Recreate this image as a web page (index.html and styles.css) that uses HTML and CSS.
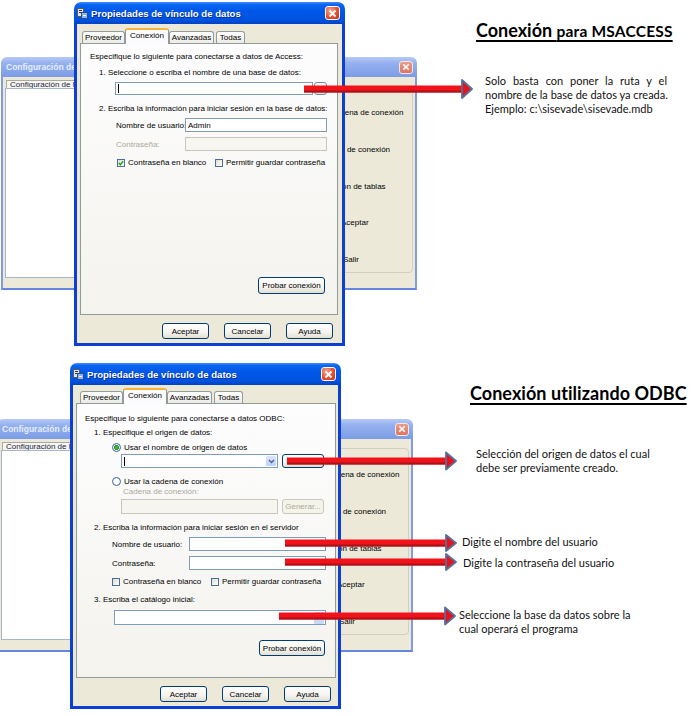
FILE: index.html
```html
<!DOCTYPE html>
<html lang="es">
<head>
<meta charset="utf-8">
<title>Conexión</title>
<link rel="stylesheet" href="styles.css">
</head>
<body>
<section class="sec sec-a">
  <div class="desk">
    <div class="bgwin bg-a">
      <div class="btitle"><span class="btxt">Configuración de</span><span class="bx"><svg width="8" height="8" viewBox="0 0 8 8"><path d="M1.2 1.2l5.6 5.6M6.8 1.2l-5.6 5.6" stroke="#fff" stroke-width="1.6"/></svg></span></div>
      <div class="bbody">
        <div class="lst">
          <div class="lhead"><span class="ltab">Configuración de la</span></div>
          <div class="lbox"></div>
        </div>
        <div class="rpan">
          <span class="rl">Cadena de conexión</span>
          <span class="rl">Test de conexión</span>
          <span class="rl">Unión de tablas</span>
          <span class="rl rl-ok">Aceptar</span>
          <span class="rl rl-salir">Salir</span>
        </div>
      </div>
    </div>

    <div class="dlg dlg-a">
      <div class="tbar">
        <svg class="ticon" width="11" height="11" viewBox="0 0 11 11"><rect x="0.5" y="0.5" width="6" height="8" fill="#e4e4e4" stroke="#5a5a5a"/><path d="M2 2.5h3M2 4.5h3" stroke="#333"/><rect x="4.5" y="4.5" width="6" height="6" fill="#8db4ee" stroke="#24508f"/><path d="M6 7.5h3" stroke="#fff"/></svg>
        <span class="ttl">Propiedades de vínculo de datos</span>
        <span class="xbtn"><svg width="9" height="9" viewBox="0 0 9 9"><path d="M1.5 1.5l6 6M7.5 1.5l-6 6" stroke="#fff" stroke-width="1.8"/></svg></span>
      </div>
      <div class="dframe fr-a">
        <div class="tabs ta">
          <span class="tab tw1">Proveedor</span>
          <span class="tab tw2 on">Conexión</span>
          <span class="tab tw3">Avanzadas</span>
          <span class="tab tw4">Todas</span>
        </div>
        <div class="panel pa">
          <div class="ln a1">Especifique lo siguiente para conectarse a datos de Access:</div>
          <div class="ln a2">1. Seleccione o escriba el nombre de una base de datos:</div>
          <div class="row a-db"><span class="inp grow"><i class="caret"></i></span><span class="btn b-dots">...</span></div>
          <div class="ln a3">2. Escriba la información para iniciar sesión en la base de datos:</div>
          <div class="row a-user"><span class="lab la">Nombre de usuario:</span><span class="inp grow">Admin</span></div>
          <div class="row a-pass"><span class="lab la dis">Contraseña:</span><span class="inp grow off"></span></div>
          <div class="row a-chk">
            <span class="cg cg-a"><span class="cb"><svg width="6" height="6" viewBox="0 0 6 6"><path d="M0.8 3l1.6 1.6L5.2 1.2" fill="none" stroke="#21a121" stroke-width="1.4"/></svg></span>Contraseña en blanco</span>
            <span class="cg"><span class="cb"></span>Permitir guardar contraseña</span>
          </div>
          <div class="btn probar a-prob">Probar conexión</div>
        </div>
        <div class="btns">
          <span class="btn bb">Aceptar</span>
          <span class="btn bb">Cancelar</span>
          <span class="btn bb">Ayuda</span>
        </div>
      </div>
    </div>
  </div>

  <div class="notes">
    <h2 class="h ha">Conexión <span class="hs">para MSACCESS</span></h2>
    <div class="txt pt">
      <p class="jl">Solo basta con poner la ruta y el</p>
      <p>nombre de la base de datos ya creada.</p>
      <p>Ejemplo: c:\sisevade\sisevade.mdb</p>
    </div>
  </div>

  <svg class="arrow ar-a" width="169" height="20" viewBox="0 0 169 20"><rect x="0" y="6.5" width="159" height="7" fill="#f2121a"/><rect x="0" y="11.5" width="159" height="2" fill="#a8131a"/><path d="M158 1L168 10L158 19Z" fill="#e5141c" stroke="#56709c" stroke-width="1.8" stroke-linejoin="round"/></svg>
</section>

<section class="sec sec-b">
  <div class="desk">
    <div class="bgwin bg-b">
      <div class="btitle"><span class="btxt">Configuración de</span><span class="bx"><svg width="8" height="8" viewBox="0 0 8 8"><path d="M1.2 1.2l5.6 5.6M6.8 1.2l-5.6 5.6" stroke="#fff" stroke-width="1.6"/></svg></span></div>
      <div class="bbody">
        <div class="lst">
          <div class="lhead"><span class="ltab">Configuración de la</span></div>
          <div class="lbox"></div>
        </div>
        <div class="rpan">
          <span class="rl">Cadena de conexión</span>
          <span class="rl">Test de conexión</span>
          <span class="rl">Unión de tablas</span>
          <span class="rl rl-ok">Aceptar</span>
          <span class="rl rl-salir">Salir</span>
        </div>
      </div>
    </div>

    <div class="dlg dlg-b">
      <div class="tbar">
        <svg class="ticon" width="11" height="11" viewBox="0 0 11 11"><rect x="0.5" y="0.5" width="6" height="8" fill="#e4e4e4" stroke="#5a5a5a"/><path d="M2 2.5h3M2 4.5h3" stroke="#333"/><rect x="4.5" y="4.5" width="6" height="6" fill="#8db4ee" stroke="#24508f"/><path d="M6 7.5h3" stroke="#fff"/></svg>
        <span class="ttl">Propiedades de vínculo de datos</span>
        <span class="xbtn"><svg width="9" height="9" viewBox="0 0 9 9"><path d="M1.5 1.5l6 6M7.5 1.5l-6 6" stroke="#fff" stroke-width="1.8"/></svg></span>
      </div>
      <div class="dframe fr-b">
        <div class="tabs tb">
          <span class="tab tw1">Proveedor</span>
          <span class="tab tw2 on">Conexión</span>
          <span class="tab tw3">Avanzadas</span>
          <span class="tab tw4">Todas</span>
        </div>
        <div class="panel pb">
          <div class="ln b1">Especifique lo siguiente para conectarse a datos ODBC:</div>
          <div class="ln b2">1. Especifique el origen de datos:</div>
          <div class="row b-r1"><span class="rd on"></span>Usar el nombre de origen de datos</div>
          <div class="row b-ds">
            <span class="inp w157"><i class="caret"></i><span class="dd"><svg width="7" height="5" viewBox="0 0 7 5"><path d="M1 1l2.5 2.5L6 1" fill="none" stroke="#4d6185" stroke-width="1.4"/></svg></span></span>
            <span class="btn w42"></span>
          </div>
          <div class="row b-r2"><span class="rd"></span>Usar la cadena de conexión</div>
          <div class="ln b-cad dis">Cadena de conexión:</div>
          <div class="row b-gen"><span class="inp w157 off"></span><span class="btn w42 boff">Generar...</span></div>
          <div class="ln b3">2. Escriba la información para iniciar sesión en el servidor</div>
          <div class="row b-user"><span class="lab lb">Nombre de usuario:</span><span class="inp w137"></span></div>
          <div class="row b-pass"><span class="lab lb">Contraseña:</span><span class="inp w137"></span></div>
          <div class="row b-chk">
            <span class="cg cg-b"><span class="cb"></span>Contraseña en blanco</span>
            <span class="cg"><span class="cb"></span>Permitir guardar contraseña</span>
          </div>
          <div class="ln b4">3. Escriba el catálogo inicial:</div>
          <div class="row b-cat"><span class="inp w212"><span class="dd dd-l"></span></span></div>
          <div class="btn probar b-prob">Probar conexión</div>
        </div>
        <div class="btns">
          <span class="btn bb">Aceptar</span>
          <span class="btn bb">Cancelar</span>
          <span class="btn bb">Ayuda</span>
        </div>
      </div>
    </div>
  </div>

  <div class="notes">
    <h2 class="h hb">Conexión utilizando ODBC</h2>
    <p class="txt nb1">Selección del origen de datos el cual<br>debe ser previamente creado.</p>
    <p class="txt nb2">Digite el nombre del usuario</p>
    <p class="txt nb3">Digite la contraseña del usuario</p>
    <p class="txt nb4">Seleccione la base da datos sobre la<br>cual operará el programa</p>
  </div>

  <svg class="arrow ar-b1" width="170" height="20" viewBox="0 0 170 20"><rect x="0" y="6.5" width="160" height="7" fill="#f2121a"/><rect x="0" y="11.5" width="160" height="2" fill="#a8131a"/><path d="M159 1.5L169 10L159 18.5Z" fill="#e5141c" stroke="#56709c" stroke-width="1.8" stroke-linejoin="round"/></svg>
  <svg class="arrow ar-b2" width="172" height="20" viewBox="0 0 172 20"><rect x="0" y="6.5" width="162" height="7" fill="#f2121a"/><rect x="0" y="11.5" width="162" height="2" fill="#a8131a"/><path d="M161 2L171 10L161 18Z" fill="#e5141c" stroke="#56709c" stroke-width="1.8" stroke-linejoin="round"/></svg>
  <svg class="arrow ar-b3" width="172" height="20" viewBox="0 0 172 20"><rect x="0" y="6.5" width="162" height="7" fill="#f2121a"/><rect x="0" y="11.5" width="162" height="2" fill="#a8131a"/><path d="M161 2L171 10L161 18Z" fill="#e5141c" stroke="#56709c" stroke-width="1.8" stroke-linejoin="round"/></svg>
  <svg class="arrow ar-b4" width="177" height="20" viewBox="0 0 177 20"><rect x="0" y="6.5" width="167" height="7" fill="#f2121a"/><rect x="0" y="11.5" width="167" height="2" fill="#a8131a"/><path d="M166 1.5L176 10L166 18.5Z" fill="#e5141c" stroke="#56709c" stroke-width="1.8" stroke-linejoin="round"/></svg>
</section>
</body>
</html>
```

FILE: styles.css
```css
* { box-sizing: border-box; margin: 0; padding: 0; }

html, body { background: #fff; }

body {
  width: 693px;
  height: 716px;
  overflow: hidden;
  font-family: "Liberation Sans", Arial, sans-serif;
  font-size: 8px;
  color: #000;
}

.sec { position: relative; display: flex; }
.sec-a { height: 355px; }
.sec-b { height: 361px; }

.desk { position: relative; width: 455px; flex: none; }

/* ---------- background window ---------- */
.bgwin {
  position: absolute;
  width: 416px;
  height: 233px;
  display: flex;
  flex-direction: column;
  z-index: 1;
}
.bg-a { left: 1px; top: 57px; }
.bg-b { left: -3px; top: 64px; }

.btitle {
  height: 20px;
  flex: none;
  display: flex;
  align-items: center;
  padding: 0 4px 0 5px;
  border-radius: 6px 6px 0 0;
  background: linear-gradient(#b6caf5, #96b1ee 30%, #86a5ea 70%, #7d9ce5);
  color: #e6edfc;
  font: bold 8.5px "Liberation Sans", Arial, sans-serif;
}
.btxt { flex: 1; white-space: nowrap; overflow: hidden; }
.bx {
  width: 14px;
  height: 13px;
  border: 1px solid #f4e8e6;
  border-radius: 3px;
  background: linear-gradient(#eb9c88, #dc7560);
  display: flex;
  align-items: center;
  justify-content: center;
}

.bbody {
  flex: 1;
  display: flex;
  background: #ece9d8;
  border: 2px solid #7f9be4;
  border-top: none;
  border-bottom-color: #6685dc;
  padding: 3px 2px 10px;
}
.lst { width: 295px; display: flex; flex-direction: column; flex: none; }
.lhead { height: 8px; display: flex; }
.ltab {
  margin-left: 1px;
  padding: 0 3px;
  height: 8px;
  line-height: 8px;
  border: 1px solid #a9a99e;
  border-bottom: none;
  background: #f7f6f1;
  color: #1b2346;
  white-space: nowrap;
}
.lbox { flex: 1; background: #fff; border: 1px solid #a7b5ca; }

.rpan {
  flex: 1;
  margin: 6px 0 5px;
  border: 1px solid #d2cfbf;
  border-radius: 4px;
  padding: 21px 0 0 29px;
  display: flex;
  flex-direction: column;
  gap: 26.75px;
}
.rl { height: 10px; line-height: 10px; white-space: nowrap; }
.rl-ok { padding-left: 11px; }
.rl-salir { padding-left: 13px; }

/* ---------- dialog ---------- */
.dlg {
  position: absolute;
  width: 271px;
  display: flex;
  flex-direction: column;
  z-index: 2;
}
.dlg-a { left: 74px; top: 2px; height: 344px; }
.dlg-b { left: 70px; top: 8px; height: 346px; }

.tbar {
  height: 22px;
  flex: none;
  display: flex;
  align-items: center;
  padding: 0 5px 0 3px;
  border-radius: 7px 7px 0 0;
  background: linear-gradient(#3f8fff 0%, #0a64f2 12%, #0058e8 40%, #0053e0 80%, #0043c4 100%);
  color: #fff;
}
.ticon { flex: none; }
.ttl {
  flex: 1;
  margin-left: 3px;
  font: bold 9.6px "Liberation Sans", Arial, sans-serif;
  text-shadow: 1px 1px 0 #0b2f8f;
  white-space: nowrap;
}
.xbtn {
  width: 15px;
  height: 14px;
  border: 1px solid #fff;
  border-radius: 3px;
  background: radial-gradient(circle at 35% 30%, #f5a88f, #e2492c 60%, #c23816);
  display: flex;
  align-items: center;
  justify-content: center;
}

.dframe {
  flex: 1;
  display: flex;
  flex-direction: column;
  background: #ece9d8;
  border: 3px solid #0b3fd6;
  border-top: none;
}
.fr-a { padding: 4px 4px 0 3px; }
.fr-b { padding: 3px 2px 0 3px; }

.tabs {
  height: 15px;
  flex: none;
  display: flex;
  align-items: flex-end;
  position: relative;
  z-index: 1;
}
.ta { margin-left: 2px; }
.tb { margin-left: 4px; }
.tab {
  height: 12px;
  line-height: 11px;
  text-align: center;
  border: 1px solid #919b9c;
  border-bottom: none;
  border-radius: 3px 3px 0 0;
  background: linear-gradient(#ffffff, #ecebe5);
  white-space: nowrap;
}
.tab.on {
  height: 16px;
  margin-bottom: -1px;
  line-height: 12px;
  background: #fcfcfe;
  border-top: 2px solid #f6b53a;
}
.tw1 { width: 43px; }
.tw2 { width: 44px; }
.tw3 { width: 45px; }
.tw4 { width: 29px; margin-left: 2px; }

.panel {
  flex: none;
  display: flex;
  flex-direction: column;
  align-items: flex-start;
  border: 1px solid #919b9c;
  background: linear-gradient(#fdfdfe, #f4f3ee);
}
.pa { height: 272px; padding: 8px 0 20px; }
.pb { height: 275px; padding: 10px 0 0; }

.ln { height: 10px; line-height: 10px; white-space: nowrap; }
.row { display: flex; align-items: center; white-space: nowrap; }
.dis { color: #aca899; }

.inp {
  height: 100%;
  display: flex;
  align-items: center;
  padding-left: 2px;
  border: 1px solid #7f9db9;
  background: #fff;
}
.inp.off { border-color: #c9c7ba; background: #f6f5f0; }
.grow { flex: 1; }
.caret { width: 1px; height: 9px; background: #000; }
.dd {
  margin-left: auto;
  margin-right: 1px;
  width: 10px;
  height: 10px;
  border-radius: 1px;
  background: linear-gradient(#dbe6fd, #bcd0fa);
  display: flex;
  align-items: center;
  justify-content: center;
}
.dd-l { height: 12px; background: #c9d8f8; }

.btn {
  display: flex;
  align-items: center;
  justify-content: center;
  border: 1px solid #003c74;
  border-radius: 3px;
  background: linear-gradient(#ffffff, #f4f3ee 60%, #e2dfd2);
  white-space: nowrap;
}
.boff { border-color: #c9c7ba; color: #aca899; background: #f5f4ea; }
.b-dots { width: 13px; height: 13px; border-color: #6f88a8; }

.cg { display: flex; align-items: center; gap: 3px; }
.cb {
  width: 8px;
  height: 8px;
  border: 1px solid #4a6e9a;
  background: linear-gradient(135deg, #dedcd4, #fff);
  display: flex;
  align-items: center;
  justify-content: center;
  flex: none;
}
.rd {
  width: 9px;
  height: 9px;
  border-radius: 50%;
  border: 1px solid #3d6594;
  background: radial-gradient(circle, #fff 0 2px, #e6e5df);
  margin-right: 3px;
  flex: none;
}
.rd.on { background: radial-gradient(circle, #3cb43c 0 1.6px, #1f8f1f 2.2px, #fff 2.6px); }

/* top dialog rows */
.a1 { margin-left: 9px; }
.a2 { margin: 6px 0 0 18px; }
.a-db { align-self: stretch; height: 13px; margin: 4px 10px 0 34px; gap: 1px; }
.a3 { margin: 9px 0 0 18px; }
.a-user, .a-pass { align-self: stretch; height: 14px; margin: 4px 10px 0 35px; }
.a-pass { margin-top: 5px; }
.la { width: 69px; }
.a-chk { height: 9px; margin: 7px 0 0 36px; }
.cg-a { width: 98px; }
.a-prob { margin: auto 12px 0 auto; width: 67px; height: 17px; }

/* bottom dialog rows */
.b1 { margin-left: 8px; }
.b2 { margin: 4px 0 0 17px; }
.b-r1 { height: 10px; margin: 4px 0 0 35px; }
.b-ds { height: 14px; margin: 2px 0 0 44px; gap: 4px; }
.w157 { width: 157px; }
.w42 { width: 42px; height: 100%; }
.b-r2 { height: 10px; margin: 8px 0 0 35px; }
.b-cad { margin: 1px 0 0 46px; }
.b-gen { height: 15px; margin: 2px 0 0 44px; gap: 4px; }
.b3 { margin: 9px 0 0 17px; }
.b-user, .b-pass { height: 14px; margin: 4px 0 0 35px; }
.b-pass { margin-top: 5px; }
.lb { width: 77px; }
.w137 { width: 137px; }
.b-chk { height: 9px; margin: 7px 0 0 35px; }
.cg-b { width: 99px; }
.b4 { margin: 9px 0 0 17px; }
.b-cat { height: 15px; margin: 5px 0 0 37px; }
.w212 { width: 212px; align-items: flex-end; }
.b-prob { margin: 15px 10px 0 auto; width: 66px; height: 16px; }

.btns {
  height: 16px;
  flex: none;
  display: flex;
  justify-content: flex-end;
  gap: 15px;
  margin-top: 8px;
  padding-right: 5px;
}
.bb { width: 47px; height: 16px; }

/* ---------- notes ---------- */
.notes {
  flex: 1;
  display: flex;
  flex-direction: column;
  align-items: flex-start;
  font-family: Lato, "Open Sans", sans-serif;
  color: #111;
}
.h {
  font-size: 18px;
  font-weight: bold;
  line-height: 22px;
  color: #000;
  white-space: nowrap;
  text-decoration: underline;
  text-decoration-thickness: 2px;
  text-underline-offset: 3px;
}
.hs { font-size: 15.5px; letter-spacing: 0.2px; }
.ha { margin: 19px 0 0 21px; }
.hb { margin: 27px 0 0 15px; letter-spacing: 0.05px; }

.txt { font-size: 11px; line-height: 14px; white-space: nowrap; }
.pt { margin: 32px 0 0 30px; width: 182px; }
.jl { text-align: justify; text-align-last: justify; }
.nb1 { margin: 43px 0 0 21px; }
.nb2 { margin: 60px 0 0 7px; }
.nb3 { margin: 7px 0 0 8px; }
.nb4 { margin: 38px 0 0 4px; }

/* ---------- arrows ---------- */
.arrow { position: absolute; z-index: 5; }
.ar-a { left: 304px; top: 79px; }
.ar-b1 { left: 287px; top: 96px; }
.ar-b2 { left: 285px; top: 178px; }
.ar-b3 { left: 285px; top: 197px; }
.ar-b4 { left: 279px; top: 251px; }
```
